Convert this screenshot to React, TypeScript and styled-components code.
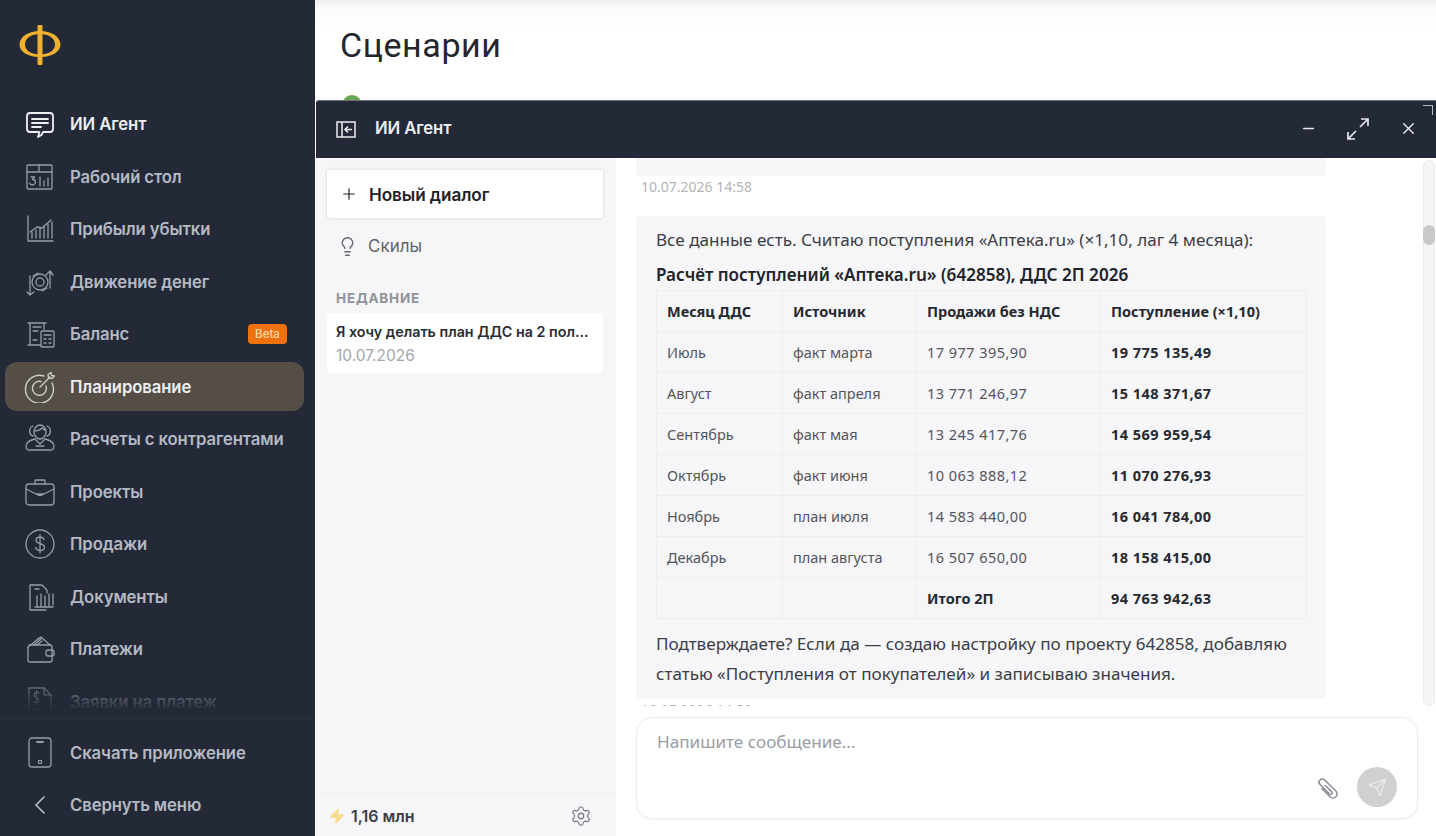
import React from 'react';
import styled, { createGlobalStyle } from 'styled-components';
import { ChevronLeft, Lightbulb, Minus, Plus, Send, Settings, X, Zap } from 'lucide-react';

const GlobalStyle = createGlobalStyle`
  html, body { margin: 0; padding: 0; height: 100%; background: #fff; }
  body { font-family: "Inter", "Liberation Sans", sans-serif; overflow: hidden; }
  #root { height: 100%; }
  * { box-sizing: border-box; }
`;

const Page = styled.div`
  position: relative;
  display: flex;
  width: 1436px;
  height: 836px;
  overflow: hidden;
`;

const Sidebar = styled.aside`
  flex: 0 0 315px;
  display: flex;
  flex-direction: column;
  height: 100%;
  background: #232937;
`;

const LogoBox = styled.div`
  height: 98px;
  padding: 24px 0 0 19px;
  flex: none;
`;

const Nav = styled.nav`
  position: relative;
  height: 620px;
  flex: none;
  overflow: hidden;
  &::after {
    content: '';
    position: absolute;
    left: 0;
    right: 0;
    bottom: 0;
    height: 48px;
    background: linear-gradient(to bottom, rgba(35, 41, 55, 0), #232937 85%);
  }
`;

const NavFooter = styled.div`
  flex: 1;
  border-top: 1px solid #2a3040;
  padding-top: 7.5px;
`;

const NavRow = styled.div<{ $active?: boolean; $bright?: boolean }>`
  position: relative;
  display: flex;
  align-items: center;
  height: 52.5px;
  padding-left: 24px;
  gap: 14px;
  color: ${p => (p.$active || p.$bright ? '#eceef1' : '#b4b9c3')};
  font-size: 16.7px;
  font-weight: 600;
  letter-spacing: -0.1px;
  z-index: 0;
  ${p => p.$active && `
    &::before {
      content: '';
      position: absolute;
      left: 5px;
      top: 1px;
      width: 299px;
      height: 49px;
      border-radius: 12px;
      background: #544e46;
      z-index: -1;
    }
  `}
`;

const NavIcon = styled.svg<{ $dim?: boolean }>`
  width: 32px;
  height: 32px;
  flex: none;
  fill: none;
  stroke: currentColor;
  stroke-width: 1.3;
  stroke-linecap: round;
  stroke-linejoin: round;
  opacity: ${p => (p.$dim ? 0.8 : 1)};
`;

const BetaBadge = styled.span`
  margin-left: auto;
  margin-right: 28px;
  width: 39px;
  height: 20px;
  border-radius: 4px;
  background: #f0720f;
  color: #f8d9a8;
  font-size: 11.5px;
  font-weight: 500;
  display: flex;
  align-items: center;
  justify-content: center;
  letter-spacing: 0;
`;

const Content = styled.main`
  flex: 1;
  background: linear-gradient(to bottom, #efefef 0, #fbfbfb 8px, #fff 30px);
`;

const Title = styled.h1`
  margin: 0;
  padding: 23px 0 0 25px;
  font-size: 34px;
  line-height: 44px;
  font-weight: 400;
  color: #23262c;
  font-family: "Roboto", "Liberation Sans", sans-serif;
  letter-spacing: 0.6px;
`;

const GreenDot = styled.span`
  position: absolute;
  left: 342px;
  top: 95px;
  width: 20px;
  height: 20px;
  border-radius: 50%;
  background: #6aa84f;
`;

const AgentWindow = styled.section`
  position: absolute;
  left: 316px;
  top: 100px;
  right: 0;
  bottom: 0;
  display: flex;
  flex-direction: column;
  background: #fff;
`;

const WindowBar = styled.header`
  position: relative;
  flex: 0 0 58px;
  display: flex;
  align-items: center;
  padding: 0 3px 2px 20px;
  background: #232937;
  border-top: 1px solid #6d717a;
  border-radius: 3px 0 0 0;
  color: #eceef1;
`;

const BarTitle = styled.span`
  margin: 0 0 1px 19px;
  font-size: 16.7px;
  font-weight: 600;
  letter-spacing: -0.1px;
`;

const BarButtons = styled.div`
  margin-left: auto;
  display: flex;
`;

const BarButton = styled.span`
  width: 50px;
  height: 50px;
  display: flex;
  align-items: center;
  justify-content: center;
  color: #e6e8ec;
`;

const CornerMark = styled.span`
  position: absolute;
  right: 3px;
  top: 4px;
  width: 10px;
  height: 10px;
  border-top: 1.5px solid #b9bcc3;
  border-right: 1.5px solid #b9bcc3;
`;

const WindowBody = styled.div`
  flex: 1;
  min-height: 0;
  display: grid;
  grid-template-columns: 300px 1fr;
`;

const DialogColumn = styled.div`
  display: flex;
  flex-direction: column;
  background: #f6f6f8;
  padding: 12px 13px 0 11px;
`;

const NewDialog = styled.div`
  height: 48px;
  display: flex;
  align-items: center;
  gap: 11px;
  padding-left: 13px;
  background: #fff;
  border-radius: 3px;
  box-shadow: 0 0 3px rgba(30, 35, 50, 0.18);
  color: #1f2228;
  font-size: 17.2px;
  font-weight: 600;
  letter-spacing: -0.1px;
`;

const SkillsRow = styled.div`
  height: 40px;
  margin-top: 8px;
  display: flex;
  align-items: center;
  gap: 10px;
  padding-left: 10px;
  color: #5f636b;
  font-size: 17px;
`;

const SectionLabel = styled.div`
  margin: 22px 0 0 9px;
  height: 20px;
  line-height: 20px;
  color: #8f939a;
  font-size: 13.5px;
  font-weight: 700;
  letter-spacing: 0.8px;
`;

const RecentCard = styled.div`
  margin-top: 5px;
  height: 60px;
  padding: 9px 9px 0;
  background: #fff;
  border-radius: 3px;
`;

const RecentTitle = styled.div`
  font-size: 14.3px;
  line-height: 20px;
  font-weight: 600;
  color: #2a2d33;
  white-space: nowrap;
`;

const RecentDate = styled.div`
  margin-top: 4px;
  font-size: 15.5px;
  line-height: 20px;
  color: #a3a6ac;
`;

const BalanceRow = styled.div`
  margin: auto -13px 0 -11px;
  height: 44px;
  display: flex;
  align-items: center;
  padding: 2px 24px 0 13px;
  border-top: 1px solid #f0f0f2;
  color: #3a3d44;
  font-size: 16px;
  font-weight: 600;
  gap: 6px;
`;

const GearSlot = styled.span`
  margin-left: auto;
  display: flex;
  color: #7e8188;
`;

const ChatColumn = styled.div`
  display: flex;
  flex-direction: column;
  min-height: 0;
`;

const ChatScroll = styled.div`
  flex: 0 0 548px;
  display: flex;
  overflow: hidden;
`;

const Transcript = styled.div`
  width: 710px;
  padding-left: 20px;
  margin-top: -24px;
  font-family: "Noto Sans", "Liberation Sans", sans-serif;
`;

const Bubble = styled.div<{ $stub?: boolean }>`
  width: 690px;
  padding: ${p => (p.$stub ? '0 20px' : '9px 20px 10px')};
  height: ${p => (p.$stub ? '42px' : 'auto')};
  background: #f6f6f8;
  border-radius: 4px;
  color: #3b3e45;
  font-size: 17.1px;
  line-height: 30px;
`;

const Stamp = styled.div`
  margin: 1px 0 19px 5px;
  font-size: 14px;
  line-height: 20px;
  color: #b2b4b9;
`;

const BubbleHead = styled.div`
  margin-top: 5px;
  font-weight: 600;
  color: #202329;
`;

const SumTable = styled.table`
  width: 650px;
  border-collapse: collapse;
  table-layout: fixed;
  font-size: 14.5px;
`;

const Cell = styled.td<{ $strong?: boolean; $num?: boolean }>`
  height: 41px;
  padding: 0 10px;
  border: 1px solid #eeeef1;
  line-height: 20px;
  white-space: nowrap;
  color: ${p => (p.$strong ? '#26292f' : '#52555c')};
  font-weight: ${p => (p.$strong ? 700 : 400)};
  letter-spacing: ${p => (p.$num ? '0.46px' : '0')};
`;

const ClosingText = styled.div`
  margin-top: 10px;
`;

const ScrollTrack = styled.div`
  margin: 2px 1px 0 auto;
  width: 12px;
  border-radius: 6px;
  background: #f5f5f6;
  border: 1px solid #ececee;
`;

const ScrollThumb = styled.div`
  margin: 64px -1px 0;
  height: 20px;
  border-radius: 6px;
  background: #c9c9cc;
`;

const Composer = styled.div`
  position: relative;
  margin: 11px 18px 0 20px;
  height: 102px;
  padding: 13px 20px;
  border: 1.5px solid #ebebee;
  border-radius: 16px;
  box-shadow: 0 1px 2px rgba(0, 0, 0, 0.05);
  color: #9a9da3;
  font-family: "Noto Sans", "Liberation Sans", sans-serif;
  font-size: 17.1px;
  line-height: 22px;
`;

const ClipSlot = styled.span`
  position: absolute;
  right: 75px;
  bottom: 15px;
  display: flex;
  color: #8b8e94;
`;

const SendButton = styled.span`
  position: absolute;
  right: 20px;
  bottom: 11px;
  width: 40px;
  height: 40px;
  border-radius: 50%;
  background: #cfd0d2;
  display: flex;
  align-items: center;
  justify-content: center;
  color: #eeeeef;
`;

const icons: Record<string, React.ReactNode> = {
  agent: (
    <>
      <path d="M6 5h20a3 3 0 0 1 3 3v13a3 3 0 0 1-3 3h-7l-1.500 3-3.500 2 1.500-5H6a3 3 0 0 1-3-3V8a3 3 0 0 1 3-3z" strokeWidth="1.8" />
      <path d="M8 11h16M8 15h16M8 19h9" strokeWidth="1.8" />
    </>
  ),
  desk: (
    <>
      <rect x="3" y="4" width="25" height="24" rx="1" />
      <path d="M3 11h25M15 4v7" />
      <path d="M7 16h3.500l-2 2.500c2 0 3 1 3 2.500s-1.500 3-3 3-2.500-.8-3-2M16 16v9M20 20v5M24 17v8" />
    </>
  ),
  chart: (
    <>
      <path d="M4 3v25h25" />
      <path d="M8 25v-6M12 25v-8M16 25v-10M20 25v-12M24 25v-14M28 25v-16" />
      <path d="M6 19l7-5 5 1 9-8" />
    </>
  ),
  flow: (
    <>
      <circle cx="16" cy="16" r="8" />
      <circle cx="16" cy="16" r="4" />
      <path d="M26 22V6M22 9l4-4 3 4M6 10v19M3 26l3 3 4-3" />
      <path d="M9 10l5-3M23 22l-5 3" />
    </>
  ),
  balance: (
    <>
      <path d="M6 27V5h14v6M4 5h18M4 27h13" />
      <path d="M9 9h8M9 13h5M9 22h4" />
      <rect x="17" y="13" width="13" height="16" rx="1" />
      <path d="M20 17h7M20 21h2M25 21h2M20 25h2M25 25h2" />
    </>
  ),
  plan: (
    <>
      <path d="M28 12a14 14 0 1 1-8-7" strokeWidth="1.4" />
      <path d="M22 15a7 7 0 1 1-5-4.500" strokeWidth="1.4" />
      <path d="M16 16L26 6M24 3.500l.5 3.500 3.500.5 2.500-2.500-3-.5-.5-3z" strokeWidth="1.4" />
    </>
  ),
  partners: (
    <>
      <path d="M10 9c0-4 3-7 6-7s6 3 6 7c0 4-3 7-6 7s-6-3-6-7zM10 8c3 0 6-1 8-3l4 3" />
      <path d="M9 13c-4-1-5-8 0-10M23 13c4-1 5-8 0-10" />
      <path d="M11 16c-4 1-9 3-9 7 0 3 1 4 3 4h22c2 0 3-1 3-4 0-4-5-6-9-7l-5 5zM12 23h8" />
    </>
  ),
  case: (
    <>
      <rect x="2" y="8" width="28" height="21" rx="3" />
      <path d="M11 8V5a1 1 0 0 1 1-1h8a1 1 0 0 1 1 1v3" />
      <path d="M2 13l10 5h8l10-5M13 18c1 2 5 2 6 0" />
    </>
  ),
  coin: (
    <>
      <circle cx="16" cy="16" r="14" />
      <path d="M20 11.500c-.5-1.500-2-2.500-4-2.500-2.500 0-4 1.300-4 3.200 0 4.500 8.500 2.500 8.500 7.200 0 2-1.800 3.100-4.300 3.100s-4-1.200-4.500-3M16 7v18" />
    </>
  ),
  docs: (
    <>
      <path d="M22 29H6V4h12l5 5v3" />
      <path d="M11 8h4M13 26V15M17 26V13M21 26V15M25 26V13M29 24V13M11 26h18" />
    </>
  ),
  wallet: (
    <>
      <path d="M5 12h21a2 2 0 0 1 2 2v13a2 2 0 0 1-2 2H6a2 2 0 0 1-2-2V14" />
      <path d="M4 14l13-10 9 8M7 12l8-7M10 12l7-6M13 12l5-4" />
      <rect x="22" y="17" width="8" height="6" rx="2" />
    </>
  ),
  request: (
    <>
      <path d="M5 2h15l7 7v20H5z" />
      <path d="M20 2v7h7M15 7c-1-1-5-1-5 2 0 3 5 2 5 5s-4 3-5 2M12.500 5v13M9 23h8M9 26h11" />
    </>
  ),
  phone: (
    <>
      <rect x="5" y="1" width="22" height="29" rx="3" />
      <path d="M13 5h6" strokeWidth="2" />
      <circle cx="16" cy="25" r="1.700" />
    </>
  ),
};

const NavGlyph = ({ name, dim }: { name: string; dim?: boolean }) => (
  <NavIcon viewBox="0 0 32 32" $dim={dim}>{icons[name]}</NavIcon>
);

const navItems = [
  { icon: 'agent', label: 'ИИ Агент', bright: true },
  { icon: 'desk', label: 'Рабочий стол' },
  { icon: 'chart', label: 'Прибыли убытки' },
  { icon: 'flow', label: 'Движение денег' },
  { icon: 'balance', label: 'Баланс', beta: true },
  { icon: 'plan', label: 'Планирование', active: true },
  { icon: 'partners', label: 'Расчеты с контрагентами' },
  { icon: 'case', label: 'Проекты' },
  { icon: 'coin', label: 'Продажи' },
  { icon: 'docs', label: 'Документы' },
  { icon: 'wallet', label: 'Платежи' },
  { icon: 'request', label: 'Заявки на платеж' },
];

const rows = [
  ['Июль', 'факт марта', '17 977 395,90', '19 775 135,49'],
  ['Август', 'факт апреля', '13 771 246,97', '15 148 371,67'],
  ['Сентябрь', 'факт мая', '13 245 417,76', '14 569 959,54'],
  ['Октябрь', 'факт июня', '10 063 888,12', '11 070 276,93'],
  ['Ноябрь', 'план июля', '14 583 440,00', '16 041 784,00'],
  ['Декабрь', 'план августа', '16 507 650,00', '18 158 415,00'],
];

export default function App() {
  return (
    <Page>
      <GlobalStyle />
      <Sidebar>
        <LogoBox>
          <svg width="42" height="42" viewBox="0 0 42 42" fill="#f0b030">
            <path
              fillRule="evenodd"
              d="M21 7c11.300 0 20.500 5.800 20.500 13.500S32.300 33 21 33 .5 28.200.5 20.500 9.700 7 21 7zm0 3C13 10 6 14 6 20.500S13 30.500 21 30.500s15-3.500 15-10S29 10 21 10z"
            />
            <rect x="18.500" y="1" width="5" height="40" rx="1" />
          </svg>
        </LogoBox>
        <Nav>
          {navItems.map(item => (
            <NavRow key={item.label} $active={item.active} $bright={item.bright}>
              <NavGlyph name={item.icon} dim={!item.bright} />
              {item.label}
              {item.beta && <BetaBadge>Beta</BetaBadge>}
            </NavRow>
          ))}
        </Nav>
        <NavFooter>
          <NavRow>
            <NavGlyph name="phone" dim />
            Скачать приложение
          </NavRow>
          <NavRow>
            <NavIcon as={ChevronLeft} strokeWidth={1.5} />
            Свернуть меню
          </NavRow>
        </NavFooter>
      </Sidebar>

      <Content>
        <Title>Сценарии</Title>
      </Content>
      <GreenDot />

      <AgentWindow>
        <WindowBar>
          <svg width="20" height="20" viewBox="0 0 20 20" fill="none" stroke="currentColor" strokeWidth="1.500">
            <rect x="1" y="3" width="18" height="15" />
            <path d="M6 3v15M16 10.500H9M12 7.500l-3 3 3 3" />
          </svg>
          <BarTitle>ИИ Агент</BarTitle>
          <BarButtons>
            <BarButton><Minus size={17} strokeWidth={1.8} /></BarButton>
            <BarButton>
              <svg width="24" height="24" viewBox="0 0 24 24" fill="none" stroke="currentColor" strokeWidth="1.700">
                <path d="M14 10l8-8M15 2h7v7M10 14l-8 8M2 15v7h7" />
              </svg>
            </BarButton>
            <BarButton><X size={19} strokeWidth={1.8} /></BarButton>
          </BarButtons>
          <CornerMark />
        </WindowBar>

        <WindowBody>
          <DialogColumn>
            <NewDialog>
              <Plus size={18} strokeWidth={1.6} />
              Новый диалог
            </NewDialog>
            <SkillsRow>
              <Lightbulb size={21} strokeWidth={1.5} />
              Скилы
            </SkillsRow>
            <SectionLabel>НЕДАВНИЕ</SectionLabel>
            <RecentCard>
              <RecentTitle>Я хочу делать план ДДС на 2 пол...</RecentTitle>
              <RecentDate>10.07.2026</RecentDate>
            </RecentCard>
            <BalanceRow>
              <Zap size={16} fill="#f7dc8e" stroke="#f7dc8e" />
              1,16 млн
              <GearSlot><Settings size={22} strokeWidth={1.4} /></GearSlot>
            </BalanceRow>
          </DialogColumn>

          <ChatColumn>
            <ChatScroll>
              <Transcript>
                <Bubble $stub />
                <Stamp>10.07.2026 14:58</Stamp>
                <Bubble>
                  <div>Все данные есть. Считаю поступления «Аптека.ru» (×1,10, лаг 4 месяца):</div>
                  <BubbleHead>Расчёт поступлений «Аптека.ru» (642858), ДДС 2П 2026</BubbleHead>
                  <SumTable>
                    <colgroup>
                      <col width="126" />
                      <col width="134" />
                      <col width="184" />
                      <col width="206" />
                    </colgroup>
                    <tbody>
                      <tr>
                        <Cell $strong>Месяц ДДС</Cell>
                        <Cell $strong>Источник</Cell>
                        <Cell $strong>Продажи без НДС</Cell>
                        <Cell $strong>Поступление (×1,10)</Cell>
                      </tr>
                      {rows.map(r => (
                        <tr key={r[0]}>
                          <Cell>{r[0]}</Cell>
                          <Cell>{r[1]}</Cell>
                          <Cell $num>{r[2]}</Cell>
                          <Cell $strong $num>{r[3]}</Cell>
                        </tr>
                      ))}
                      <tr>
                        <Cell />
                        <Cell />
                        <Cell $strong>Итого 2П</Cell>
                        <Cell $strong $num>94 763 942,63</Cell>
                      </tr>
                    </tbody>
                  </SumTable>
                  <ClosingText>
                    Подтверждаете? Если да — создаю настройку по проекту 642858, добавляю статью «Поступления от покупателей» и записываю значения.
                  </ClosingText>
                </Bubble>
                <Stamp>10.07.2026 14:59</Stamp>
              </Transcript>
              <ScrollTrack><ScrollThumb /></ScrollTrack>
            </ChatScroll>
            <Composer>
              Напишите сообщение...
              <ClipSlot>
                <svg width="28" height="28" viewBox="0 0 24 24" fill="none" stroke="currentColor" strokeWidth="1.300" strokeLinecap="round">
                  <g transform="rotate(-45 12 12)">
                    <path d="M8.500 8v10a3.500 3.500 0 0 0 7 0V4.500a2.800 2.800 0 0 0-5.600 0V16a1.300 1.300 0 0 0 2.600 0V8" />
                  </g>
                </svg>
              </ClipSlot>
              <SendButton><Send size={19} strokeWidth={1.5} /></SendButton>
            </Composer>
          </ChatColumn>
        </WindowBody>
      </AgentWindow>
    </Page>
  );
}
